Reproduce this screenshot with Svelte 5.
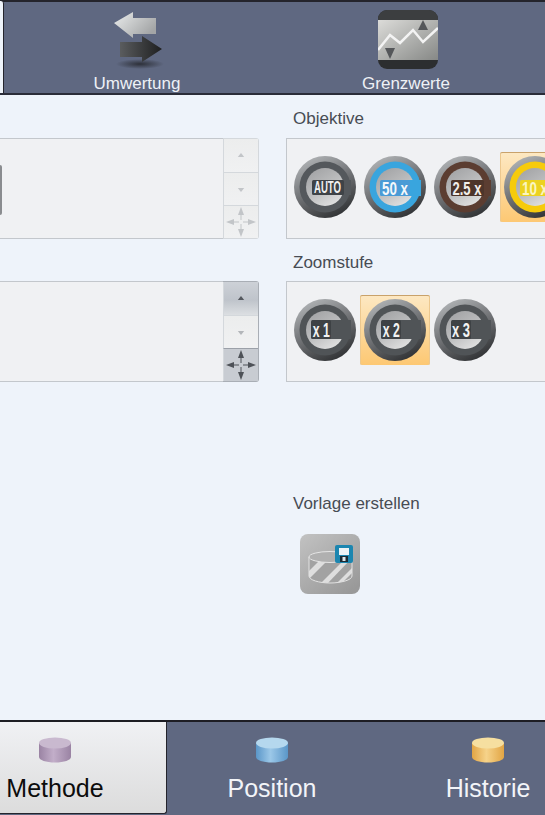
<script>
  const objectives = [
    { label: 'AUTO', ring: '#54585c', box: '#3f4347', size: 16, len: 27, dx: 2.5, y: -7, h: 15, bx: -13, bw: 32, fill: '#f2f2f2' },
    { label: '50 x', ring: '#39a5de', box: '#4a9bd6', size: 19, len: 26, dx: 0, y: -7, h: 16, bx: -15, bw: 30, fill: '#f4f8fb' },
    { label: '2.5 x', ring: '#5b3d31', box: '#4d352b', size: 19, len: 29, dx: 2, y: -7, h: 16, bx: -14, bw: 33, fill: '#f2eeea' },
    { label: '10 x', ring: '#f6cb0c', box: '#ecd21f', size: 19, len: 26, dx: 0, y: -7, h: 16, bx: -15, bw: 30, fill: '#fbf6c0', selected: true }
  ];
  const zooms = [
    { label: 'x 1', ring: '#505457', box: '#3e4245', size: 20, len: 17, dx: -3.7, y: -10, h: 19, bx: -14, bw: 20, fill: '#f2f2f2' },
    { label: 'x 2', ring: '#505457', box: '#3e4245', size: 20, len: 17, dx: -3.7, y: -10, h: 19, bx: -14, bw: 20, fill: '#f2f2f2', selected: true },
    { label: 'x 3', ring: '#505457', box: '#3e4245', size: 20, len: 18, dx: -4, y: -10, h: 19, bx: -14, bw: 20, fill: '#f2f2f2' }
  ];
  const moves = [
    'M0-15-3-7H-.5V-2H.5V-7H3Z',
    'M0 15-3 7H-.5V2H.5V7H3Z',
    'M-15 0-7-3V-.5H-2V.5H-7V3Z',
    'M15 0 7-3V-.5H2V.5H7V3Z'
  ];
</script>

{#snippet lens(item, id)}
  <div class="lens-btn" class:selected={item.selected}>
    <svg class="lens" viewBox="-32 -32 64 64" width="64" height="64" aria-hidden="true">
      <defs>
        <linearGradient id="rim{id}" x1="0.2" y1="0" x2="0.7" y2="1">
          <stop offset="0" stop-color="#b4b7b9" /><stop offset="0.45" stop-color="#77797c" /><stop offset="1" stop-color="#2f3133" />
        </linearGradient>
        <linearGradient id="disc{id}" x1="0.2" y1="0" x2="0.8" y2="1">
          <stop offset="0" stop-color="#a2a3a5" /><stop offset="0.5" stop-color="#bcbdbe" /><stop offset="1" stop-color="#e4e4e4" />
        </linearGradient>
      </defs>
      <circle r="31" fill="url(#rim{id})" />
      <circle r="25.5" fill={item.ring} />
      <circle r="19" fill="url(#disc{id})" />
      <rect x={item.bx + 2} y={item.y} width={26 - item.bx - 2} height={item.h} fill={item.ring} />
      <rect x={item.bx} y={item.y} width={item.bw} height={item.h} rx="1.500" fill={item.box} />
      <text
        class="lens-text"
        x={item.dx}
        y={item.y + item.h / 2 + item.size * 0.36}
        text-anchor="middle"
        font-size={item.size}
        textLength={item.len}
        lengthAdjust="spacingAndGlyphs"
        fill={item.fill}
      >{item.label}</text>
    </svg>
  </div>
{/snippet}

{#snippet spin(active)}
  <div class="spin" class:active>
    <div class="spin-btn up"><svg viewBox="-5 -3 10 6" width="10" height="6" aria-hidden="true"><path d="M0-3-4 2H4Z" /></svg></div>
    <div class="spin-btn down"><svg viewBox="-5 -3 10 6" width="10" height="6" aria-hidden="true"><path d="M0 3-4-2H4Z" /></svg></div>
    <div class="spin-btn move">
      <svg viewBox="-16 -16 32 32" width="32" height="32" aria-hidden="true">
        {#each moves as d}<path {d} />{/each}
      </svg>
    </div>
  </div>
{/snippet}

{#snippet cylinder(id, top, light, edge)}
  <svg viewBox="0 0 34 26" width="34" height="26" aria-hidden="true">
    <defs>
      <linearGradient id="cyl{id}" x1="0" y1="0" x2="1" y2="0">
        <stop offset="0" stop-color={edge} /><stop offset="0.45" stop-color={light} /><stop offset="1" stop-color={edge} />
      </linearGradient>
    </defs>
    <path d="M1 6V20C1 23 8 25.500 17 25.500S33 23 33 20V6Z" fill="url(#cyl{id})" />
    <ellipse cx="17" cy="6" rx="16" ry="5.500" fill={top} />
  </svg>
{/snippet}

<div class="app">
  <header class="top">
    <div class="active-stub"></div>
    <div class="top-tab first">
      <svg class="top-icon" viewBox="0 0 60 60" width="60" height="60" aria-hidden="true">
        <defs>
          <linearGradient id="arrowL" x1="0" y1="0" x2="1" y2="0.6"><stop offset="0" stop-color="#eceeee" /><stop offset="1" stop-color="#a3a5a6" /></linearGradient>
          <linearGradient id="arrowR" x1="0" y1="0" x2="1" y2="0"><stop offset="0" stop-color="#5a5c5e" /><stop offset="1" stop-color="#1e1f20" /></linearGradient>
          <radialGradient id="shade"><stop offset="0" stop-color="#24262c" stop-opacity="0.85" /><stop offset="1" stop-color="#24262c" stop-opacity="0" /></radialGradient>
        </defs>
        <path d="M7 13 26 2V8H49V24H26V28Z" fill="url(#arrowL)" />
        <ellipse cx="33" cy="54" rx="24" ry="5" fill="url(#shade)" />
        <path d="M13 32H35V26L55 39 35 52V47H13Z" fill="url(#arrowR)" />
      </svg>
      <span class="top-label">Umwertung</span>
    </div>
    <div class="top-tab second">
      <svg class="top-icon shifted" viewBox="0 0 60 60" width="60" height="60" aria-hidden="true">
        <defs>
          <linearGradient id="limit" x1="0" y1="0" x2="1" y2="1"><stop offset="0" stop-color="#dcdcd9" /><stop offset="1" stop-color="#868886" /></linearGradient>
          <clipPath id="rounded"><rect width="60" height="59" rx="9" /></clipPath>
        </defs>
        <g clip-path="url(#rounded)">
          <rect width="60" height="59" fill="#2c2e30" />
          <rect width="60" height="10" fill="#3c3e40" />
          <rect y="10" width="60" height="40" fill="url(#limit)" />
          <path d="M0 40 12 25 22 33 35 20 45 32 60 18" fill="none" stroke="#f3f3f3" stroke-width="2.500" />
          <path d="M45 10 40 20H50Z" fill="#55575a" />
          <path d="M12 49 7 38H17Z" fill="#55575a" />
        </g>
      </svg>
      <span class="top-label">Grenzwerte</span>
    </div>
  </header>

  <main class="content">
    <div class="panel-left one">
      <div class="field"><span class="handle"></span></div>
      {@render spin(false)}
    </div>
    <div class="group">
      <h2>Objektive</h2>
      <div class="lens-panel">
        {#each objectives as item, i}{@render lens(item, `o${i}`)}{/each}
      </div>
    </div>

    <div class="panel-left two">
      <div class="field"></div>
      {@render spin(true)}
    </div>
    <div class="group second-group">
      <h2>Zoomstufe</h2>
      <div class="lens-panel">
        {#each zooms as item, i}{@render lens(item, `z${i}`)}{/each}
      </div>
    </div>

    <div class="group template">
      <h2>Vorlage erstellen</h2>
      <svg class="template-icon" viewBox="0 0 60 60" width="60" height="60" aria-hidden="true">
        <defs>
          <linearGradient id="tile" x1="0" y1="0" x2="0.8" y2="1"><stop offset="0" stop-color="#c2c2c2" /><stop offset="1" stop-color="#999" /></linearGradient>
          <clipPath id="dishClip"><path d="M9 23V42C9 46 19 49 30 49S52 46 52 42V23Z" /></clipPath>
        </defs>
        <rect width="60" height="60" rx="8" fill="url(#tile)" />
        <path d="M9 23V42C9 46 19 49 30 49S52 46 52 42V23Z" fill="#a3a3a3" />
        <g clip-path="url(#dishClip)" fill="#e9e9e9" opacity="0.85">
          <path d="M8 38 22 24H30L8 46Z" />
          <path d="M20 50 44 26H50L27 50Z" />
          <path d="M36 50 53 33V38L41 50Z" />
        </g>
        <path d="M9 23V42C9 46 19 49 30 49S52 46 52 42V23" fill="none" stroke="#e2e2e2" />
        <ellipse cx="30" cy="23" rx="21" ry="5.500" fill="#b0b0b0" stroke="#e5e5e5" />
        <rect x="35" y="11" width="18" height="18" rx="2" fill="#1c86b0" />
        <rect x="39" y="14" width="10" height="7" fill="#eef3f5" />
        <rect x="40" y="22" width="8" height="6" fill="#1d2a33" />
        <rect x="42.500" y="23" width="3" height="4" fill="#dfe7ea" />
      </svg>
    </div>
  </main>

  <nav class="bottom">
    <div class="bottom-tab current">
      {@render cylinder('a', '#c9b9cf', '#c2aec9', '#9a83a3')}
      <span>Methode</span>
    </div>
    <div class="bottom-tab">
      {@render cylinder('b', '#b5d8ee', '#9cc8e8', '#5a96c8')}
      <span>Position</span>
    </div>
    <div class="bottom-tab">
      {@render cylinder('c', '#f6dfa0', '#f6d38a', '#e2a544')}
      <span>Historie</span>
    </div>
  </nav>
</div>

<style>
  :global(body) {
    margin: 0;
    background: #eef3fa;
  }
  .app {
    width: 545px;
    height: 815px;
    overflow: hidden;
    display: flex;
    flex-direction: column;
    background: #eef3fa;
    font-family: "Liberation Sans", Arial, sans-serif;
  }
  .top {
    box-sizing: border-box;
    height: 95px;
    flex: none;
    display: flex;
    background: #5f6881;
    border-top: 2px solid #24242c;
    border-bottom: 2px solid #2a2c38;
  }
  .active-stub {
    width: 3px;
    margin-top: -1px;
    background: #eef3fa;
    border-right: 1px solid #24242c;
    border-top-right-radius: 3px;
    flex: none;
  }
  .top-tab {
    display: flex;
    flex-direction: column;
    align-items: center;
    padding-top: 8px;
  }
  .top-tab.first {
    width: 266px;
  }
  .top-tab.second {
    width: 272px;
  }
  .top-icon {
    display: block;
    flex: none;
  }
  .top-icon.shifted {
    margin-left: 4px;
  }
  .top-label {
    margin-top: 4px;
    font-size: 17px;
    line-height: 20px;
    color: #eef1f6;
  }
  .content {
    flex: 1;
    display: grid;
    grid-template-columns: 259px 290px;
    grid-template-rows: 143px 143px auto;
    column-gap: 27px;
    align-content: start;
    padding-top: 1px;
  }
  .panel-left {
    align-self: end;
    box-sizing: border-box;
    height: 101px;
    display: flex;
  }
  .field {
    flex: 1;
    position: relative;
    background: #f0f1f3;
    border-top: 1px solid #c3c7cc;
    border-bottom: 1px solid #c3c7cc;
  }
  .handle {
    position: absolute;
    left: 0;
    top: 26px;
    width: 2px;
    height: 50px;
    background: #8a8c8f;
    border-radius: 0 2px 2px 0;
  }
  .spin {
    box-sizing: border-box;
    width: 36px;
    flex: none;
    display: grid;
    grid-template-rows: 1fr 1fr 1fr;
    border: 1px solid #d4d8dc;
    border-left: 0;
    border-radius: 0 3px 3px 0;
    background: #ecedee;
  }
  .spin-btn {
    display: flex;
    align-items: center;
    justify-content: center;
    border-left: 1px solid #d4d8dc;
    background: linear-gradient(#eceded, #f0f1f2);
    fill: #c2c5c8;
  }
  .spin-btn + .spin-btn {
    border-top: 1px solid #d4d8dc;
  }
  .spin-btn.up svg, .spin-btn.down svg {
    width: 8px;
    height: 5px;
  }
  .spin.active {
    border-color: #a9aeb5;
  }
  .spin.active .up {
    background: linear-gradient(#cdd1d7, #bfc4cb 55%, #dcdfe2);
    fill: #54585e;
  }
  .spin.active .down {
    fill: #b3b6ba;
  }
  .spin.active .move {
    background: #c8ccd2;
    border-top-color: #9ba0a8;
    fill: #4e5258;
  }
  .group {
    align-self: end;
  }
  h2 {
    margin: 0 0 9px 7px;
    font-size: 17px;
    font-weight: 400;
    line-height: 20px;
    color: #474c54;
  }
  .second-group h2 {
    margin-bottom: 8px;
  }
  .lens-panel {
    box-sizing: border-box;
    height: 101px;
    display: flex;
    align-items: flex-start;
    gap: 6px;
    padding: 13px 0 0 6px;
    background: #f0f1f3;
    border: 1px solid #c3c7cc;
  }
  .lens-btn {
    box-sizing: border-box;
    width: 64px;
    height: 70px;
    flex: none;
    padding-top: 3px;
    border-radius: 2px;
  }
  .lens-btn.selected {
    width: 70px;
    margin: 0 -3px;
    padding-left: 3px;
    background: linear-gradient(#fde8c2, #fdc873);
    border-top: 1px solid #c9a26b;
    box-shadow: inset 1px 0 #ecc88f, inset -1px 0 #ecc88f;
    padding-top: 2px;
  }
  .lens {
    display: block;
  }
  .lens-text {
    font-family: "Liberation Sans", sans-serif;
    font-weight: 700;
  }
  .template {
    grid-column: 2;
    align-self: start;
    margin-top: 112px;
  }
  .template h2 {
    margin-bottom: 20px;
  }
  .template-icon {
    display: block;
    margin-left: 14px;
  }
  .bottom {
    box-sizing: border-box;
    height: 95px;
    flex: none;
    display: grid;
    grid-template-columns: 167px 210px 222px;
    background: #5f6881;
    border-top: 2px solid #1d1d24;
  }
  .bottom-tab {
    display: flex;
    flex-direction: column;
    align-items: center;
    padding-top: 15px;
    color: #f2f4f8;
    font-size: 25px;
    line-height: 30px;
  }
  .bottom-tab span {
    margin-top: 10px;
  }
  .bottom-tab.current {
    box-sizing: border-box;
    margin-bottom: 1px;
    padding-right: 56px;
    background: linear-gradient(#f0f1f4, #dcdcdc);
    color: #0c0c0c;
    border-right: 1px solid #24242c;
    border-bottom: 1px solid #24242c;
    border-radius: 0 0 3px 0;
  }
</style>
